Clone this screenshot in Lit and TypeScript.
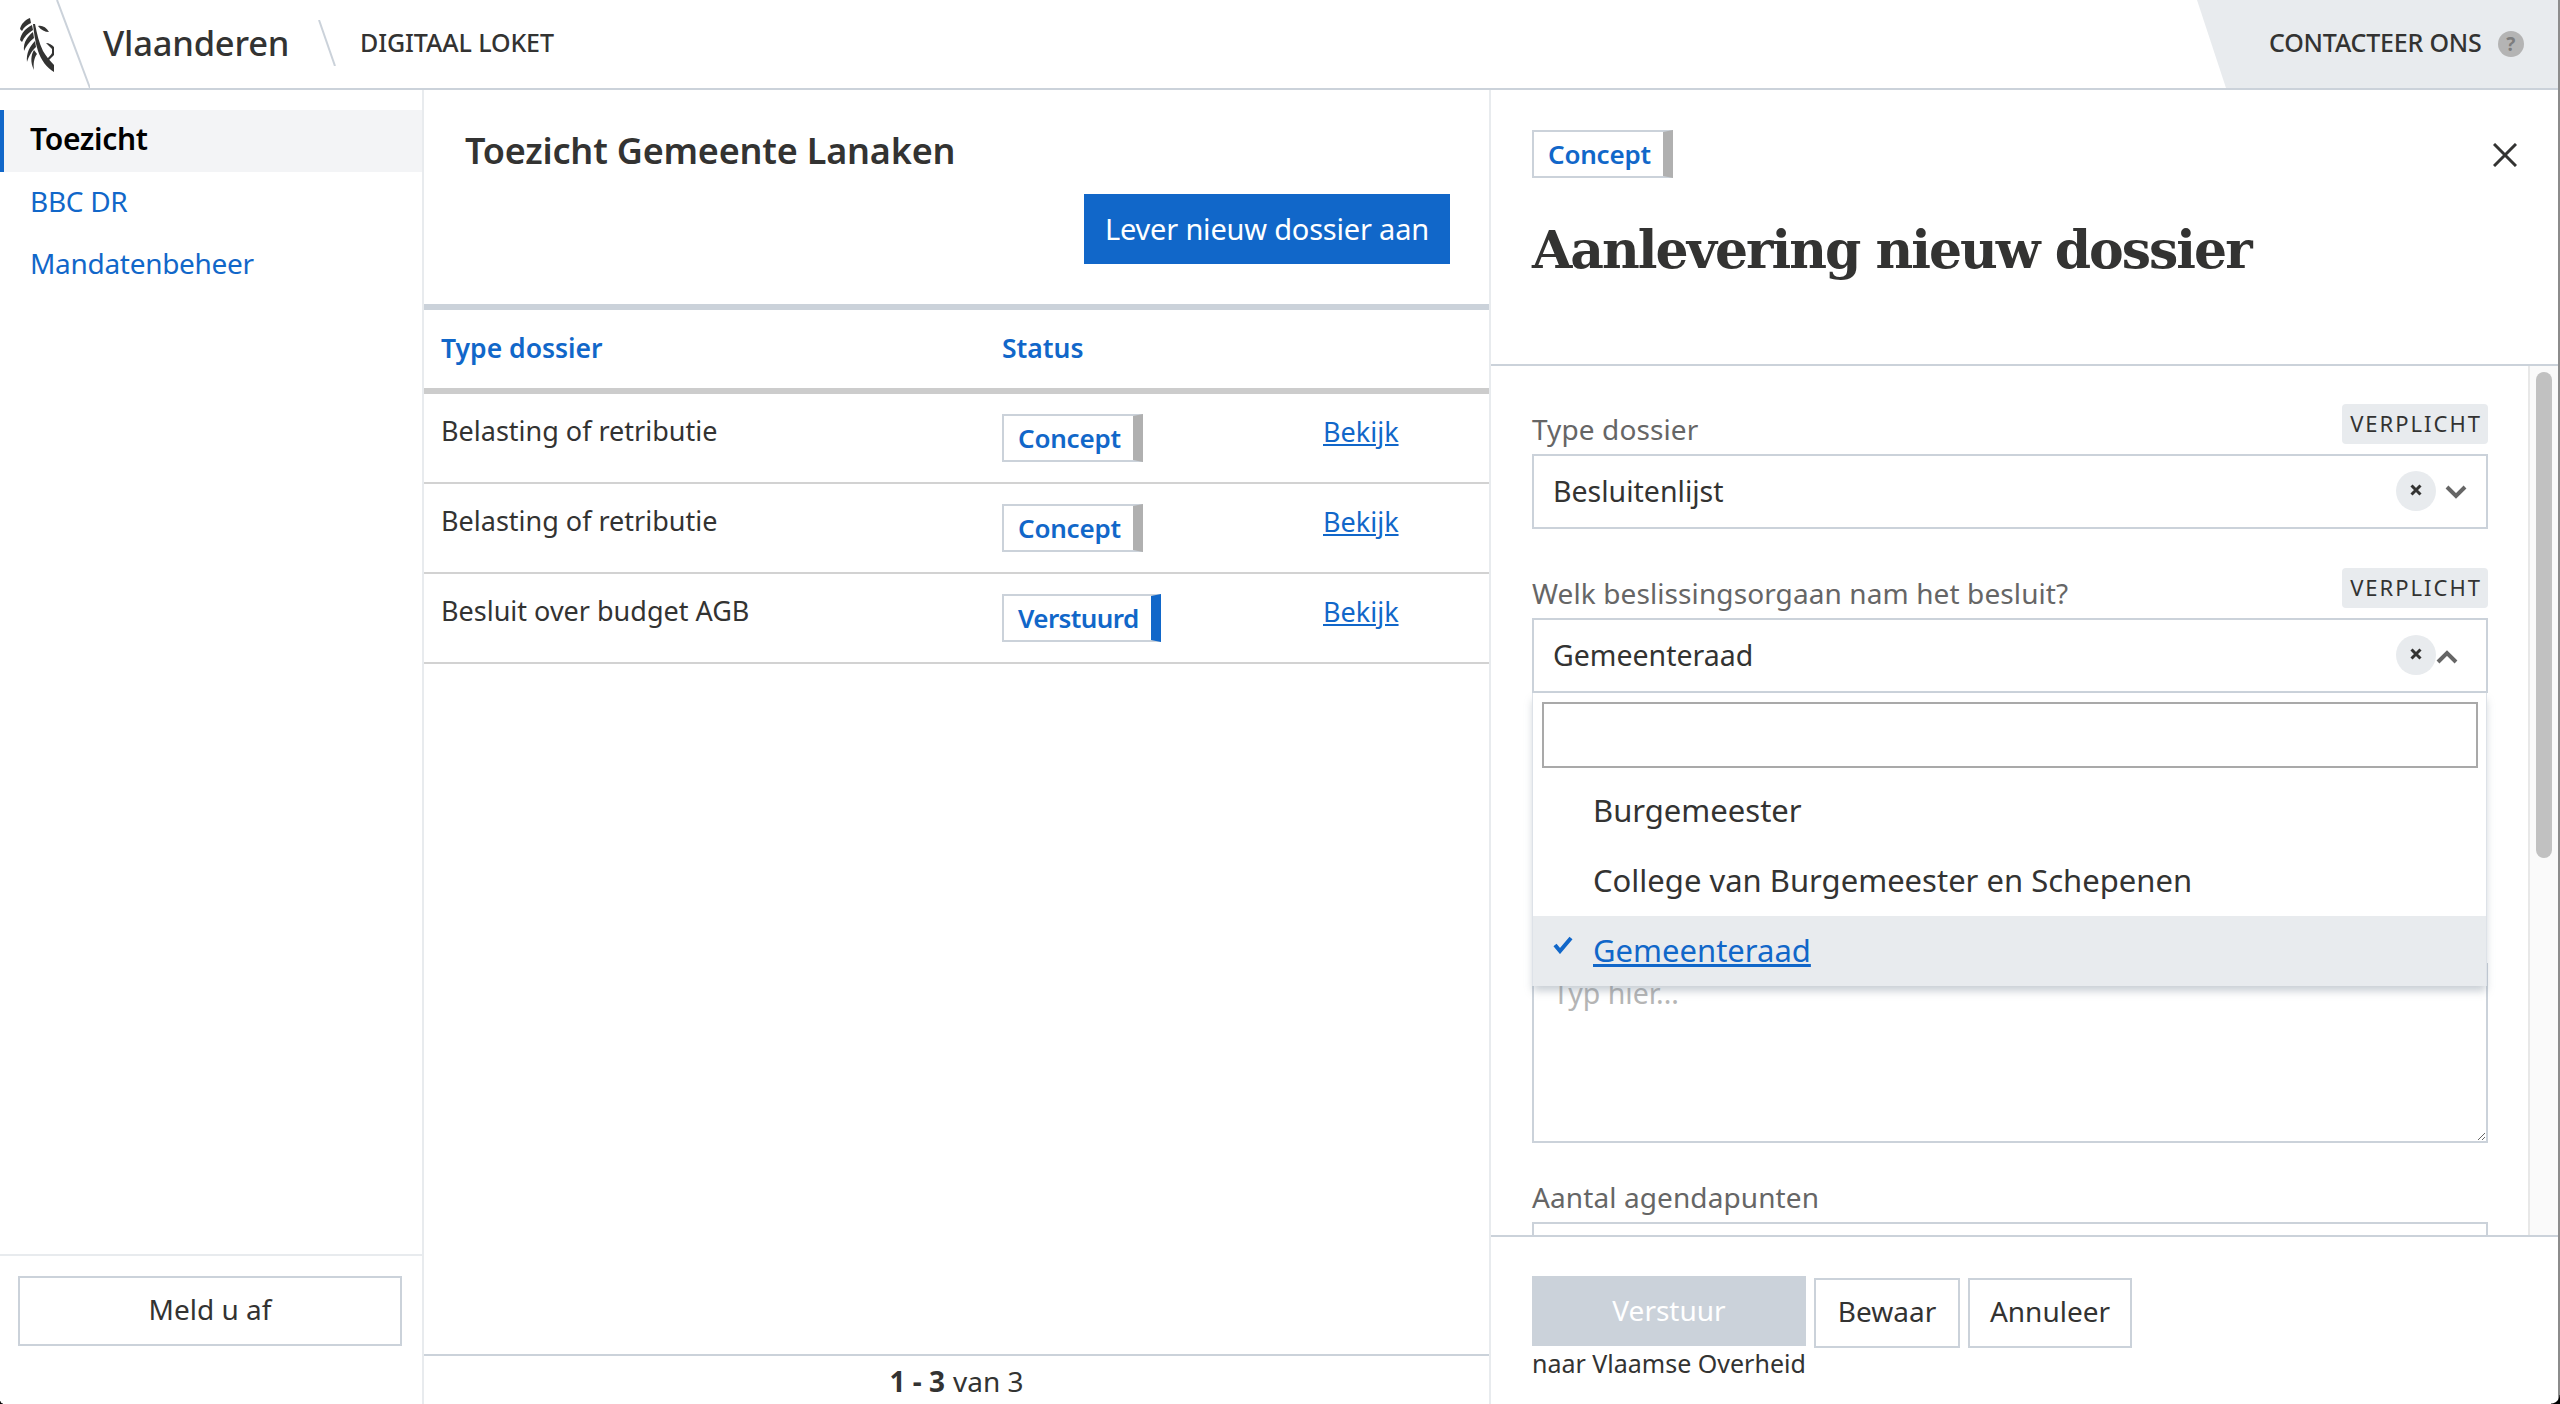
import { html, css, LitElement } from "lit";
import { customElement } from "lit/decorators.js";

const rows = [
  { type: "Belasting of retributie", status: "Concept" },
  { type: "Belasting of retributie", status: "Concept" },
  { type: "Besluit over budget AGB", status: "Verstuurd" },
];

const lion = html`<svg class="lion" viewBox="20 18 34 54" width="34" height="54" fill="#333332">
  <path d="M30 18C25 20 21 24 20 29L22 31C24 27 27 25 31 23Z" />
  <path d="M32 25C26 28 21 33 20 40L22 42C24 37 28 33 33 30Z" />
  <path d="M33 32C28 36 23 42 24 51C26 46 29 42 34 38Z" />
  <path d="M35 41C30 46 26 53 27 62C29 56 31 52 36 47Z" />
  <path d="M34 50C31 55 30 62 34 70C33 64 34 58 37 54Z" />
  <path d="M33 24L35 24C37 34 39 43 43 51C46 56 50 61 54 65L54 72C47 68 41 60 38 51C35 42 34 33 33 24Z" />
  <path d="M38 26C42 25 46 27 49 32C45 32 41 30 38 26Z" />
  <path d="M46 43C49 43 52 45 54 47L54 55L48 61L44 62C47 58 51 56 52 53L52 49C50 47 48 45 46 43Z" />
</svg>`;

const clearBtn = html`<span class="clear">
  <svg viewBox="0 0 12 12" width="12" height="12"><path d="M1.5 1.5L10.5 10.5M10.5 1.5L1.5 10.5" stroke="#333332" stroke-width="3" /></svg>
</span>`;

@customElement("app-root")
export class AppRoot extends LitElement {
  static override styles = css`
    :host {
      display: block;
      width: 2560px;
      height: 1404px;
      overflow: hidden;
      position: relative;
      font-family: "Noto Sans", "Open Sans", sans-serif;
      color: #333332;
      background: #fff;
    }
    * {
      box-sizing: border-box;
    }
    a {
      color: #1167c9;
    }
    .app {
      display: flex;
      flex-direction: column;
      height: 1404px;
      border-right: 2px solid #8c8c8c;
    }
    .corner-r,
    .corner-l {
      position: absolute;
      bottom: 0;
      z-index: 5;
    }
    .corner-r {
      right: 0;
      width: 9px;
      height: 9px;
      background: radial-gradient(circle at top left, transparent 8px, #000 9px);
    }
    .corner-l {
      left: 0;
      width: 3px;
      height: 3px;
      background: radial-gradient(circle at top right, transparent 2px, #000 3px);
    }

    /* header */
    .top {
      display: flex;
      align-items: center;
      height: 90px;
      flex: none;
      border-bottom: 2px solid #cbd2da;
    }
    .lion {
      margin-left: 20px;
      margin-top: 2px;
    }
    .slash {
      flex: none;
      align-self: flex-start;
    }
    .brand {
      font-size: 34.5px;
      font-weight: 500;
      margin-left: 13px;
      margin-bottom: 4px;
      letter-spacing: -0.2px;
      width: 215px;
    }
    .loket {
      font-size: 25px;
      font-weight: 500;
      margin-left: 24px;
      margin-bottom: 4px;
      letter-spacing: -0.1px;
    }
    .contact {
      margin-left: auto;
      width: 361px;
      height: 88px;
      background: #e8ebee;
      clip-path: polygon(0 0, 100% 0, 100% 100%, 29px 100%);
      display: flex;
      align-items: center;
      padding: 0 0 4px 72px;
      font-size: 25px;
      font-weight: 500;
      letter-spacing: -0.2px;
    }
    .help {
      width: 26px;
      height: 26px;
      border-radius: 50%;
      background: #b4b4b4;
      color: #7d7d7d;
      font-size: 19px;
      font-weight: 700;
      display: flex;
      align-items: center;
      justify-content: center;
      margin: 4px 0 0 16px;
    }

    .main {
      display: flex;
      flex: 1;
      min-height: 0;
    }

    /* sidebar */
    .side {
      width: 424px;
      flex: none;
      display: flex;
      flex-direction: column;
      border-right: 2px solid #e8ebee;
    }
    .nav {
      flex: 1;
      padding-top: 20px;
    }
    .nav a {
      display: flex;
      align-items: center;
      height: 62px;
      padding: 0 0 5px 30px;
      font-size: 28px;
      letter-spacing: -0.3px;
      text-decoration: none;
    }
    .nav a.active {
      color: #000;
      font-size: 30px;
      font-weight: 600;
      background: #f3f4f6;
      border-left: 4px solid #1167c9;
      padding-left: 26px;
    }
    .side-foot {
      border-top: 2px solid #e8ebee;
      height: 150px;
      padding: 20px 20px 0 18px;
    }
    .btn {
      display: flex;
      align-items: center;
      justify-content: center;
      height: 70px;
      padding-bottom: 5px;
      border: 2px solid #cbd2da;
      background: #fff;
      font-size: 28px;
      color: #333332;
    }

    /* dossier list */
    .list {
      width: 1067px;
      flex: none;
      display: flex;
      flex-direction: column;
      border-right: 2px solid #e8ebee;
    }
    .list h2 {
      margin: 37px 0 0 41px;
      font-size: 36px;
      line-height: 48px;
      font-weight: 600;
      letter-spacing: -0.2px;
    }
    .list-actions {
      display: flex;
      justify-content: flex-end;
      padding: 19px 39px 40px 0;
    }
    .primary {
      display: flex;
      align-items: center;
      justify-content: center;
      width: 366px;
      height: 70px;
      padding-bottom: 2px;
      background: #1167c9;
      color: #fff;
      font-size: 29px;
      letter-spacing: -0.2px;
    }
    .row {
      display: grid;
      grid-template-columns: 561px 321px 1fr;
      align-items: center;
      padding-left: 17px;
      font-size: 27px;
      height: 90px;
      border-bottom: 2px solid #d2d2d2;
    }
    .row.head {
      border-top: 6px solid #cbd2da;
      border-bottom: 6px solid #ccc;
      padding-bottom: 3px;
      color: #1167c9;
      font-weight: 600;
      font-size: 26.5px;
    }
    .cell-up {
      margin-bottom: 15px;
    }
    .row a.cell-up {
      margin-bottom: 13px;
    }
    .status {
      display: inline-flex;
      align-items: center;
      height: 48px;
      padding: 0 12px 1px 14px;
      border: 2px solid #cbd2da;
      border-right: 10px solid #b0b0b0;
      color: #1167c9;
      font-size: 26px;
      font-weight: 600;
      background: #fff;
      justify-self: start;
      letter-spacing: -0.2px;
    }
    .status.sent {
      border-right-color: #1167c9;
      letter-spacing: -0.6px;
    }
    .pager {
      margin-top: auto;
      height: 50px;
      border-top: 2px solid #cbd2da;
      display: flex;
      align-items: center;
      justify-content: center;
      padding-top: 2px;
      font-size: 28px;
    }
    .pager b {
      margin-right: 8px;
    }

    /* form panel */
    .panel {
      flex: 1;
      min-width: 0;
      display: flex;
      flex-direction: column;
    }
    .panel-head {
      height: 276px;
      flex: none;
      border-bottom: 2px solid #cbd2da;
      padding: 40px 41px 0 41px;
    }
    .panel-row {
      display: flex;
      justify-content: space-between;
      align-items: center;
    }
    .close {
      margin-top: 2px;
    }
    .panel h1 {
      margin: 37px 0 0;
      font-family: "DejaVu Serif", serif;
      font-size: 52px;
      line-height: 70px;
      font-weight: 700;
      letter-spacing: -2px;
    }
    .panel-body {
      flex: 1;
      min-height: 0;
      display: flex;
      overflow: hidden;
    }
    .form {
      flex: 1;
      min-width: 0;
      padding: 38px 40px 0 41px;
    }
    .track {
      width: 30px;
      flex: none;
      background: #fafafa;
      border-left: 2px solid #e8e8e8;
      padding: 6px 0 0 6px;
    }
    .thumb {
      width: 16px;
      height: 486px;
      border-radius: 8px;
      background: #c1c1c1;
    }
    .label-row {
      display: flex;
      justify-content: space-between;
      align-items: flex-end;
      margin-bottom: 10px;
      color: #666;
      font-size: 28px;
      line-height: 30px;
      letter-spacing: 0.1px;
    }
    .tag {
      height: 40px;
      display: flex;
      align-items: center;
      padding: 0 6px 2px 8px;
      background: #e8ebee;
      border-radius: 4px;
      color: #333332;
      font-size: 22px;
      letter-spacing: 2px;
    }
    .select {
      position: relative;
      height: 75px;
      border: 2px solid #cbd2da;
      display: flex;
      align-items: center;
      padding: 0 0 2px 19px;
      font-size: 28.5px;
      margin-bottom: 39px;
    }
    .select.open {
      margin-bottom: 0;
    }
    .clear {
      position: absolute;
      top: 15px;
      right: 50px;
      width: 40px;
      height: 40px;
      border-radius: 50%;
      background: #e8ebee;
      display: flex;
      align-items: center;
      justify-content: center;
      padding-bottom: 3px;
    }
    .chevron {
      position: absolute;
      top: 28px;
      right: 19px;
    }
    .chevron.up {
      right: 28px;
      top: 29px;
    }
    .dropdown {
      position: absolute;
      top: 73px;
      left: -2px;
      right: -1px;
      z-index: 2;
      background: #fff;
      border-left: 1px solid #dde2e8;
      border-right: 1px solid #dde2e8;
      box-shadow: 0 6px 8px -1px rgba(120, 135, 150, 0.4);
      padding-top: 9px;
    }
    .search {
      height: 66px;
      margin: 0 8px 8px 9px;
      border: 2px solid #a9a9a9;
    }
    .option {
      position: relative;
      height: 70px;
      display: flex;
      align-items: center;
      padding: 0 0 3px 60px;
      font-size: 31px;
    }
    .option.selected {
      background: #e8ebee;
    }
    .check {
      position: absolute;
      left: 20px;
      top: 20px;
    }
    textarea {
      display: block;
      width: 100%;
      height: 180px;
      margin: 270px 0 39px;
      padding: 9px 19px;
      border: 2px solid #cbd2da;
      outline: none;
      font-family: inherit;
      font-size: 28.5px;
    }
    textarea::placeholder {
      color: #b5b5b5;
    }
    .plain {
      height: 75px;
      border: 2px solid #cbd2da;
    }
    .panel-foot {
      height: 169px;
      flex: none;
      border-top: 2px solid #cbd2da;
      padding: 39px 0 0 41px;
    }
    .actions {
      display: flex;
      align-items: flex-start;
      gap: 8px;
    }
    .actions .submit {
      width: 274px;
      height: 70px;
      display: flex;
      align-items: center;
      justify-content: center;
      padding-bottom: 3px;
      background: #cbd2da;
      color: #fff;
      font-size: 28px;
    }
    .actions .btn {
      margin-top: 2px;
    }
    .actions .save {
      width: 146px;
    }
    .actions .cancel {
      width: 164px;
    }
    .hint {
      font-size: 25px;
      line-height: 30px;
    }
  `;

  private badge(status: string) {
    return html`<span class="status ${status === "Verstuurd" ? "sent" : ""}">${status}</span>`;
  }

  override render() {
    return html`
      <div class="app">
        <header class="top">
          ${lion}
          <svg class="slash" width="36" height="88"><path d="M3 0L36 88" stroke="#cbd2da" stroke-width="2" /></svg>
          <span class="brand">Vlaanderen</span>
          <svg class="slash" style="margin-top:20px" width="18" height="46"><path d="M1 0L17 46" stroke="#cbd2da" stroke-width="2" /></svg>
          <span class="loket">DIGITAAL LOKET</span>
          <div class="contact">CONTACTEER ONS<span class="help">?</span></div>
        </header>
        <div class="main">
          <aside class="side">
            <nav class="nav">
              <a class="active" href="#">Toezicht</a>
              <a href="#">BBC DR</a>
              <a href="#">Mandatenbeheer</a>
            </nav>
            <div class="side-foot"><div class="btn">Meld u af</div></div>
          </aside>
          <section class="list">
            <h2>Toezicht Gemeente Lanaken</h2>
            <div class="list-actions"><div class="primary">Lever nieuw dossier aan</div></div>
            <div class="row head"><span>Type dossier</span><span>Status</span></div>
            ${rows.map(
              (r) => html`<div class="row">
                <span class="cell-up">${r.type}</span>
                ${this.badge(r.status)}
                <a class="cell-up" href="#">Bekijk</a>
              </div>`,
            )}
            <div class="pager"><b>1 - 3</b> van 3</div>
          </section>
          <section class="panel">
            <div class="panel-head">
              <div class="panel-row">
                ${this.badge("Concept")}
                <svg class="close" width="24" height="24" viewBox="0 0 24 24"><path d="M1 1L23 23M23 1L1 23" stroke="#333332" stroke-width="3" /></svg>
              </div>
              <h1>Aanlevering nieuw dossier</h1>
            </div>
            <div class="panel-body">
              <div class="form">
                <div class="label-row"><span>Type dossier</span><span class="tag">VERPLICHT</span></div>
                <div class="select">
                  Besluitenlijst ${clearBtn}
                  <svg class="chevron" width="22" height="16" viewBox="0 0 22 16"><path d="M2 3L11 12L20 3" fill="none" stroke="#666" stroke-width="4" /></svg>
                </div>
                <div class="label-row"><span>Welk beslissingsorgaan nam het besluit?</span><span class="tag">VERPLICHT</span></div>
                <div class="select open">
                  Gemeenteraad ${clearBtn}
                  <svg class="chevron up" width="22" height="16" viewBox="0 0 22 16"><path d="M2 13L11 4L20 13" fill="none" stroke="#666" stroke-width="4" /></svg>
                  <div class="dropdown">
                    <div class="search"></div>
                    <div class="option">Burgemeester</div>
                    <div class="option">College van Burgemeester en Schepenen</div>
                    <div class="option selected">
                      <svg class="check" width="20" height="18" viewBox="0 0 20 18"><path d="M2 9L7 15L18 2" fill="none" stroke="#1167c9" stroke-width="4" /></svg>
                      <a href="#">Gemeenteraad</a>
                    </div>
                  </div>
                </div>
                <textarea placeholder="Typ hier..."></textarea>
                <div class="label-row"><span>Aantal agendapunten</span></div>
                <div class="plain"></div>
              </div>
              <div class="track"><div class="thumb"></div></div>
            </div>
            <div class="panel-foot">
              <div class="actions">
                <div class="submit">Verstuur</div>
                <div class="btn save">Bewaar</div>
                <div class="btn cancel">Annuleer</div>
              </div>
              <div class="hint">naar Vlaamse Overheid</div>
            </div>
          </section>
        </div>
        <div class="corner-l"></div>
        <div class="corner-r"></div>
      </div>
    `;
  }
}
